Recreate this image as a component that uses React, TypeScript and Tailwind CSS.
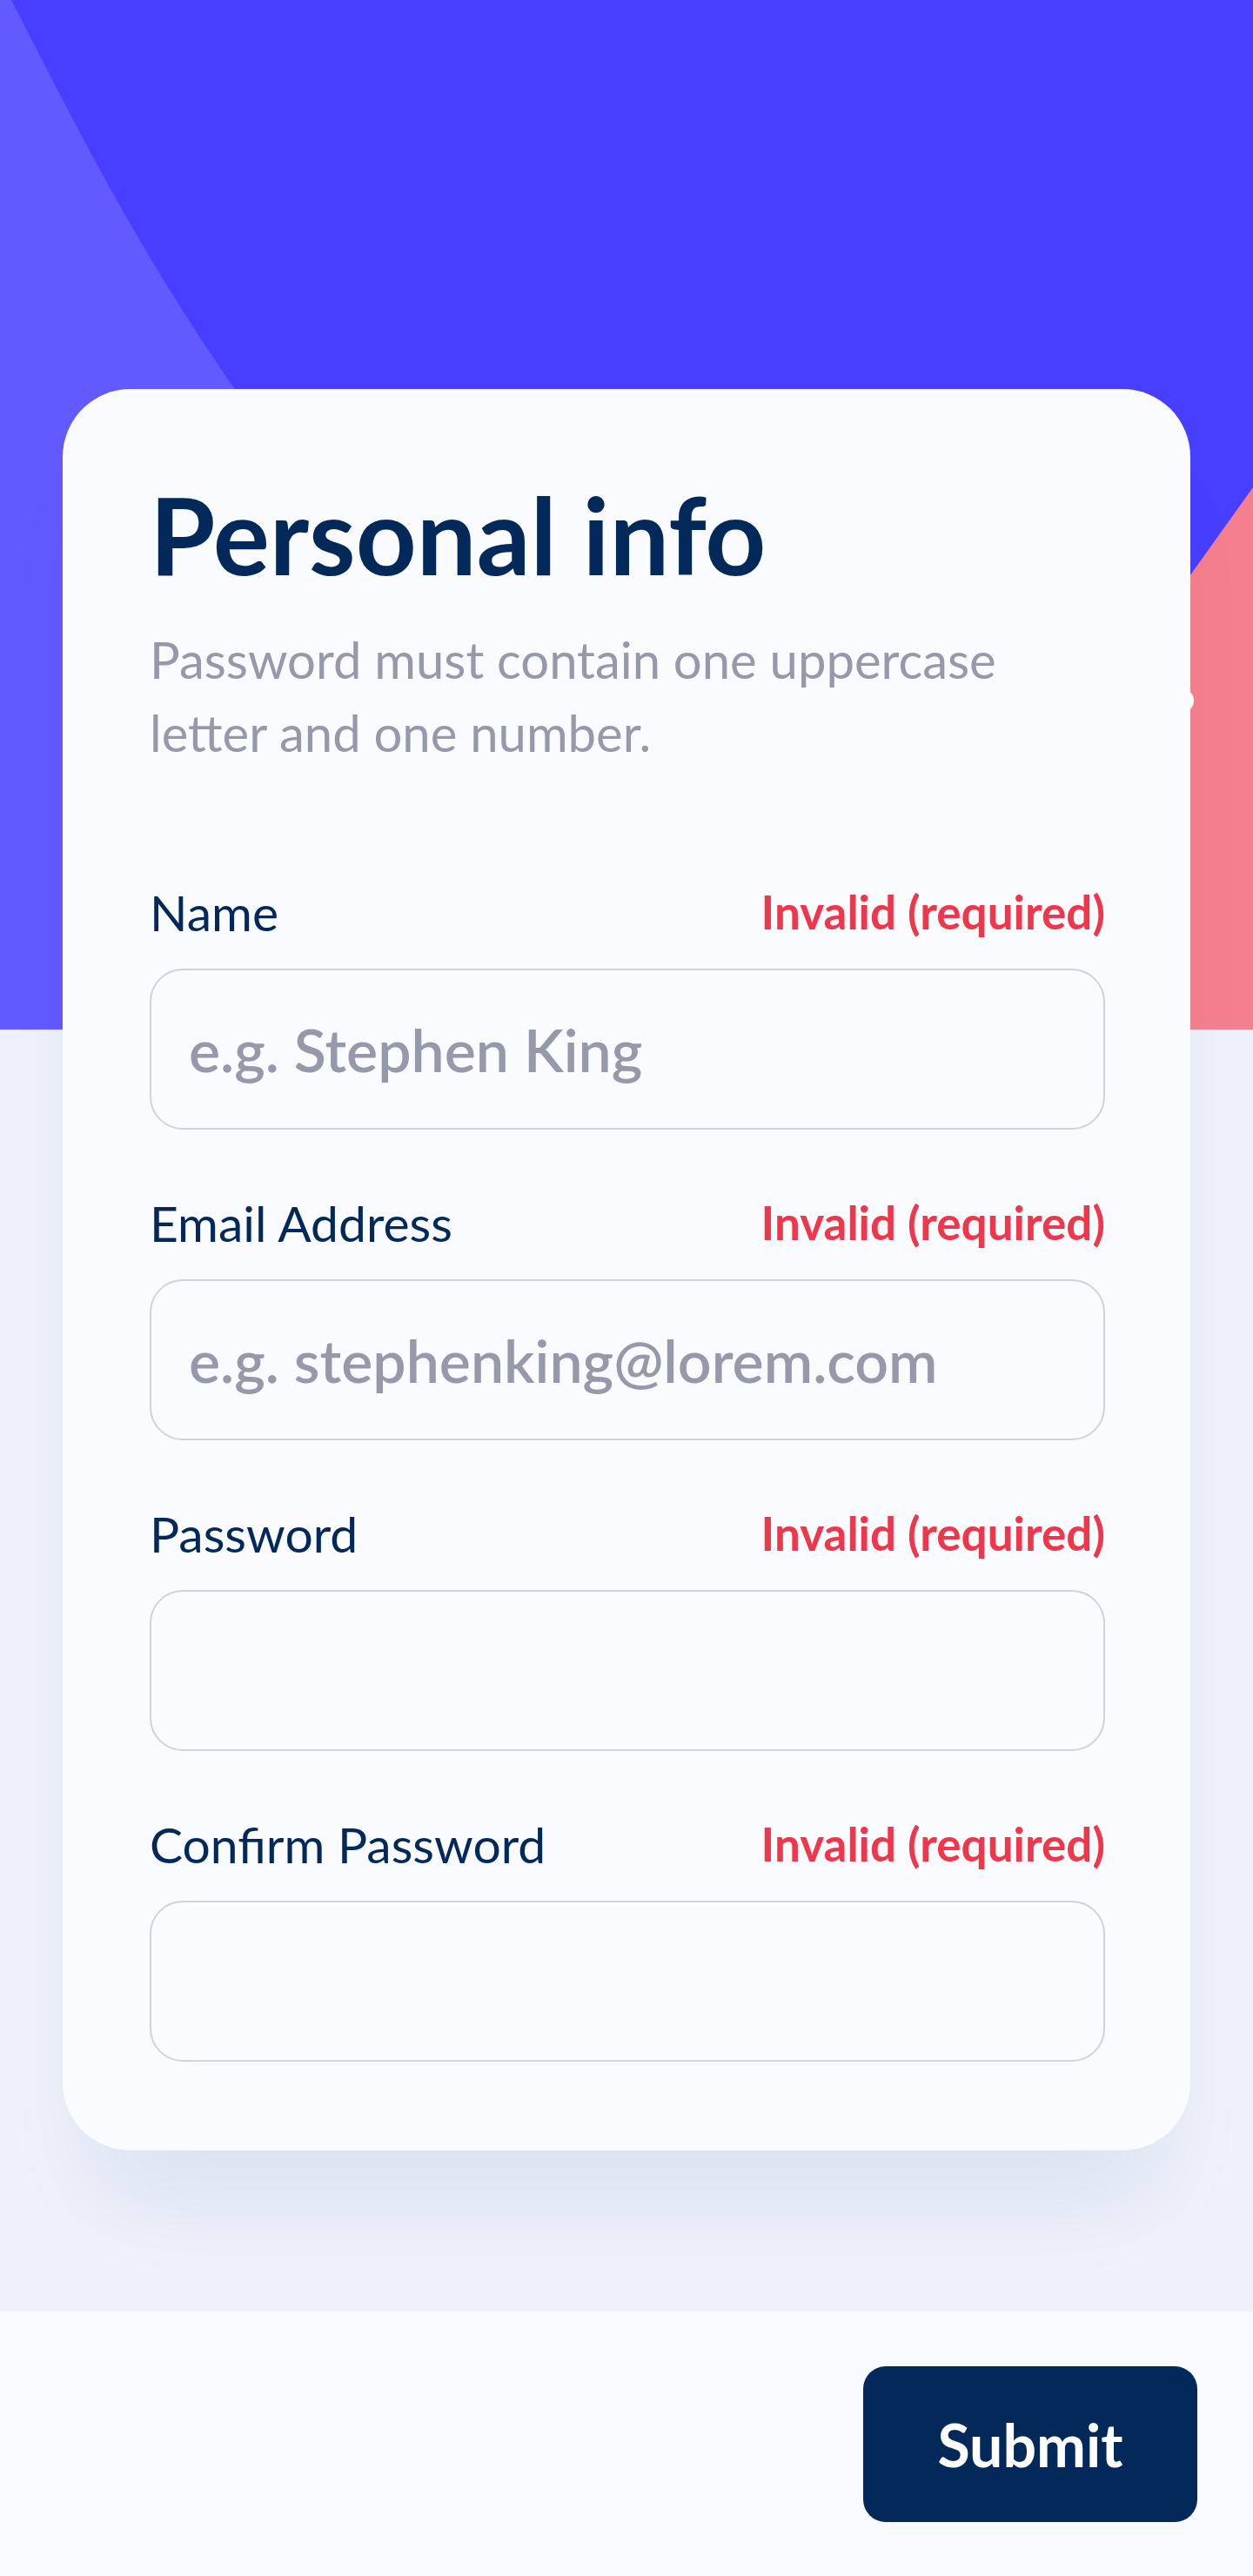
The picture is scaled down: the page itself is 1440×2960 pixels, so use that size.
import { useState } from "react";

const fields = [
  { id: "name", label: "Name", placeholder: "e.g. Stephen King", type: "text" },
  { id: "email", label: "Email Address", placeholder: "e.g. stephenking@lorem.com", type: "email" },
  { id: "password", label: "Password", placeholder: "", type: "password" },
  { id: "confirm", label: "Confirm Password", placeholder: "", type: "password" },
];

// header backdrop: blue field, lighter wedge on the left, pink wedge on the right
const HeaderShapes = () => (
  <svg
    className="absolute inset-x-0 top-0 h-[1183px] w-full"
    viewBox="0 0 1440 1183"
    preserveAspectRatio="none"
  >
    <rect width="1440" height="1183" fill="#483eff" />
    <path
      d="M0 0 L13 0 C 90 150, 160 290, 270 447 L 700 1183 L0 1183 Z"
      fill="#6259ff"
    />
    <path d="M1440 560 L995 1183 L1440 1183 Z" fill="#f5808d" />
    <circle cx="1358" cy="805" r="14" fill="#ffffff" />
  </svg>
);

const App = () => {
  const [values, setValues] = useState<Record<string, string>>({});

  return (
    <div className="min-h-[2960px] bg-[#f9fafe] font-['Lato',sans-serif]">
      <div className="relative bg-[#ecf1fb] pt-[447px] pb-[185px]">
        <HeaderShapes />
        <div className="relative mx-[72px] rounded-[78px] bg-[#f9fbff] pl-[100px] pr-[98px] pt-[106px] pb-[102px] shadow-[0_90px_110px_-40px_rgba(2,41,89,0.08)]">
          <h1 className="text-[122px] leading-[122px] font-bold text-[#022959]">
            Personal info
          </h1>
          <p className="mt-[41px] text-[58px] leading-[84px] text-[#9699aa]">
            Password must contain one uppercase
            <br />
            letter and one number.
          </p>
          <div className="mt-[132px] flex flex-col gap-[75px]">
            {fields.map((f) => (
              <div key={f.id}>
                <div className="flex h-[64px] items-center justify-between">
                  <label
                    htmlFor={f.id}
                    className="text-[57px] leading-[64px] text-[#022959]"
                  >
                    {f.label}
                  </label>
                  <span className="text-[53px] leading-[64px] font-bold text-[#ee374a]">
                    Invalid (required)
                  </span>
                </div>
                <input
                  id={f.id}
                  type={f.type}
                  placeholder={f.placeholder}
                  value={values[f.id] || ""}
                  onChange={(e) => setValues({ ...values, [f.id]: e.target.value })}
                  className="mt-[33px] block h-[185px] w-full rounded-[38px] border-2 border-[#cfd3e1] bg-transparent pl-[43px] text-[68px] font-semibold text-[#022959] outline-none placeholder:text-[#9699aa]"
                />
              </div>
            ))}
          </div>
        </div>
      </div>
      <div className="flex h-[305px] items-center justify-end pr-[64px]">
        <button className="h-[179px] w-[384px] rounded-[26px] bg-[#022959] text-[68px] font-bold text-white">
          Submit
        </button>
      </div>
    </div>
  );
};

export default App;
